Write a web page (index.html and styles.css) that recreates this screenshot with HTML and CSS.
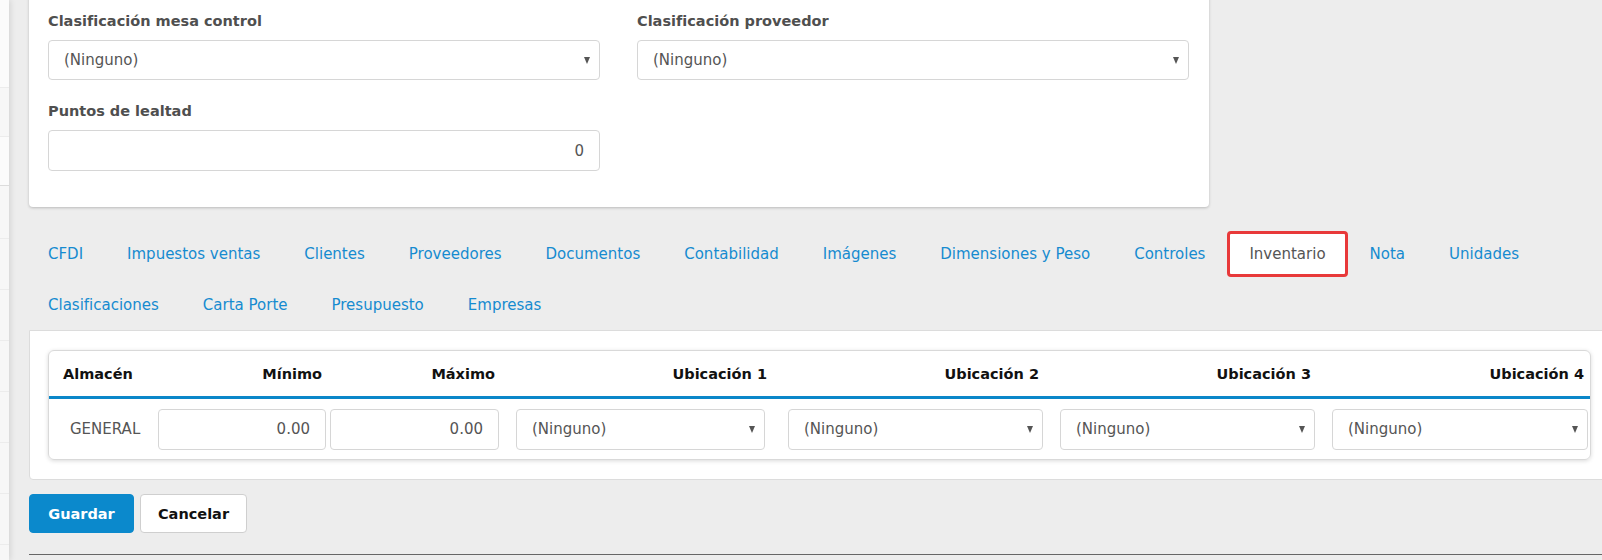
FILE: index.html
```html
<!DOCTYPE html>
<html lang="es">
<head>
    <meta charset="UTF-8">
    <meta name="viewport" content="width=device-width, initial-scale=1.0">
    <title>Producto - Inventario</title>
    <link rel="stylesheet" href="styles.css">
</head>
<body>
    <div class="layout">
        <!-- Menu lateral (colapsado) -->
        <aside class="sidebar">
            <div class="side-item side-light" style="height: 87px"></div>
            <div class="side-item" style="height: 48px"></div>
            <div class="side-item side-light side-end" style="height: 48px"></div>
            <div class="side-item" style="height: 52px"></div>
            <div class="side-item" style="height: 50px"></div>
            <div class="side-item" style="height: 50px"></div>
            <div class="side-item" style="height: 50px"></div>
            <div class="side-item" style="height: 50px"></div>
            <div class="side-item" style="height: 50px"></div>
            <div class="side-item" style="height: 50px"></div>
        </aside>

        <main class="content">
            <!-- Datos generales -->
            <section class="card">
                <div class="form-grid">
                    <div class="form-group">
                        <label>Clasificación mesa control</label>
                        <div class="select-wrap">
                            <select><option>(Ninguno)</option></select>
                        </div>
                    </div>
                    <div class="form-group">
                        <label>Clasificación proveedor</label>
                        <div class="select-wrap">
                            <select><option>(Ninguno)</option></select>
                        </div>
                    </div>
                    <div class="form-group">
                        <label>Puntos de lealtad</label>
                        <input class="input num" type="text" value="0">
                    </div>
                </div>
            </section>

            <!-- Pestañas -->
            <nav class="tabs">
                <a href="#">CFDI</a>
                <a href="#">Impuestos ventas</a>
                <a href="#">Clientes</a>
                <a href="#">Proveedores</a>
                <a href="#">Documentos</a>
                <a href="#">Contabilidad</a>
                <a href="#">Imágenes</a>
                <a href="#">Dimensiones y Peso</a>
                <a href="#">Controles</a>
                <a href="#" class="active">Inventario</a>
                <a href="#">Nota</a>
                <a href="#">Unidades</a>
                <a href="#">Clasificaciones</a>
                <a href="#">Carta Porte</a>
                <a href="#">Presupuesto</a>
                <a href="#">Empresas</a>
            </nav>

            <section class="tab-panel">
                <div class="table-box">
                    <table class="inv-table">
                        <colgroup>
                            <col style="width: 107px">
                            <col style="width: 172px">
                            <col style="width: 173px">
                            <col style="width: 266px">
                            <col style="width: 278px">
                            <col style="width: 272px">
                            <col style="width: 273px">
                        </colgroup>
                        <thead>
                            <tr>
                                <th class="left">Almacén</th>
                                <th>Mínimo</th>
                                <th>Máximo</th>
                                <th class="flush">Ubicación 1</th>
                                <th>Ubicación 2</th>
                                <th>Ubicación 3</th>
                                <th>Ubicación 4</th>
                            </tr>
                        </thead>
                        <tbody>
                            <tr>
                                <td class="store">GENERAL</td>
                                <td class="cell-num"><input class="input num" type="text" value="0.00"></td>
                                <td class="cell-num"><input class="input num" type="text" value="0.00"></td>
                                <td class="cell-sel"><div class="select-wrap"><select><option>(Ninguno)</option></select></div></td>
                                <td class="cell-sel wide"><div class="select-wrap"><select><option>(Ninguno)</option></select></div></td>
                                <td class="cell-sel"><div class="select-wrap"><select><option>(Ninguno)</option></select></div></td>
                                <td class="cell-sel"><div class="select-wrap"><select><option>(Ninguno)</option></select></div></td>
                            </tr>
                        </tbody>
                    </table>
                </div>
            </section>

            <div class="actions">
                <button class="btn btn-primary">Guardar</button>
                <button class="btn btn-default">Cancelar</button>
            </div>

            <hr class="divider">
        </main>
    </div>
</body>
</html>
```

FILE: styles.css
```css
html, body {
    overflow: hidden;
}

body {
    margin: 0;
    background-color: #ededed;
    font-family: "DejaVu Sans", Verdana, sans-serif;
    font-size: 15px;
    color: #555;
}

.layout {
    display: flex;
    align-items: flex-start;
    min-height: 560px;
}

/* Menu lateral */
.sidebar {
    flex: none;
    width: 9px;
    min-height: 560px;
    background-color: #f7f7f7;
    box-shadow: 1px 0 6px rgba(0, 0, 0, 0.13);
    position: relative;
    z-index: 1;
}

.side-item {
    border-bottom: 1px solid #ececec;
    background-color: #f7f7f7;
}

.side-light {
    background-color: #fbfbfb;
}

.side-end {
    border-bottom: 1px solid #dcdcdc;
}

.content {
    flex: 1;
    min-width: 0;
    padding-left: 20px;
}

/* Tarjeta de datos generales */
.card {
    width: 1180px;
    box-sizing: border-box;
    margin-top: -9px;
    padding: 20px 20px 36px 19px;
    background-color: #fff;
    border-radius: 4px;
    box-shadow: 0 1px 3px rgba(0, 0, 0, 0.22);
}

.form-grid {
    display: grid;
    grid-template-columns: 552px 552px;
    column-gap: 37px;
    row-gap: 21px;
}

.form-group label {
    display: block;
    height: 20px;
    line-height: 20px;
    margin-bottom: 9px;
    font-size: 14.5px;
    font-weight: bold;
    color: #4f4f4f;
}

.select-wrap {
    position: relative;
}

.select-wrap select {
    appearance: none;
    -webkit-appearance: none;
    display: block;
    width: 100%;
    height: 40px;
    box-sizing: border-box;
    padding: 0 30px 0 15px;
    border: 1px solid #d6d6d6;
    border-radius: 4px;
    background-color: #fff;
    font-family: inherit;
    font-size: 15px;
    color: #555;
}

.inv-table .select-wrap select {
    height: 41px;
}

/* Flechita del select */
.select-wrap::after {
    content: "";
    position: absolute;
    right: 10px;
    top: 17px;
    border-left: 3px solid transparent;
    border-right: 3px solid transparent;
    border-top: 7px solid #555;
}

.input {
    display: block;
    width: 100%;
    height: 41px;
    box-sizing: border-box;
    padding: 0 15px;
    border: 1px solid #d6d6d6;
    border-radius: 4px;
    background-color: #fff;
    font-family: inherit;
    font-size: 15px;
    color: #555;
}

.input.num {
    text-align: right;
}

/* Pestañas */
.tabs {
    display: flex;
    flex-wrap: wrap;
    row-gap: 5px;
    margin: 24px 0 0 -3px;
}

.tabs a {
    display: flex;
    align-items: center;
    height: 46px;
    box-sizing: border-box;
    padding: 0 22px;
    font-size: 15px;
    color: #168bd0;
    text-decoration: none;
}

.tabs a.active {
    padding: 0 19px;
    background-color: #fff;
    color: #555;
    border: 3px solid #e8393a;
    border-radius: 4px;
}

.tab-panel {
    width: max-content;
    margin-top: 2px;
    padding: 19px 19px 19px 18px;
    background-color: #fff;
    border: 1px solid #dcdcdc;
    border-radius: 0 0 0 4px;
}

.table-box {
    width: 1543px;
    box-sizing: border-box;
    border: 1px solid #d9d9d9;
    border-radius: 6px;
    box-shadow: 0 1px 4px rgba(0, 0, 0, 0.15);
    overflow: hidden;
}

.inv-table {
    width: 100%;
    table-layout: fixed;
    border-collapse: collapse;
}

.inv-table th {
    height: 45px;
    padding: 0 6px 0 0;
    text-align: right;
    font-size: 14.5px;
    font-weight: bold;
    color: #111;
    border-bottom: 3px solid #0a87c9;
}

.inv-table th.left {
    text-align: left;
    padding-left: 14px;
}

.inv-table th.flush {
    padding-right: 0;
}

.inv-table td {
    height: 60px;
    padding: 0 2px;
    vertical-align: middle;
}

.inv-table td.store {
    padding-left: 21px;
    color: #555;
}

.inv-table td.cell-sel {
    padding-left: 15px;
}

.inv-table td.cell-sel.wide {
    padding-left: 21px;
}

/* Botones */
.actions {
    display: flex;
    gap: 6px;
    margin-top: 14px;
}

.btn {
    height: 39px;
    box-sizing: border-box;
    border-radius: 4px;
    font-family: inherit;
    font-size: 14.5px;
    font-weight: bold;
    cursor: pointer;
}

.btn-primary {
    width: 105px;
    background-color: #0b89cc;
    border: 1px solid #0b89cc;
    color: #fff;
}

.btn-default {
    width: 107px;
    background-color: #fff;
    border: 1px solid #cfcfcf;
    color: #111;
}

.divider {
    margin: 21px 0 0;
    border: 0;
    border-top: 1px solid #666;
}
```
